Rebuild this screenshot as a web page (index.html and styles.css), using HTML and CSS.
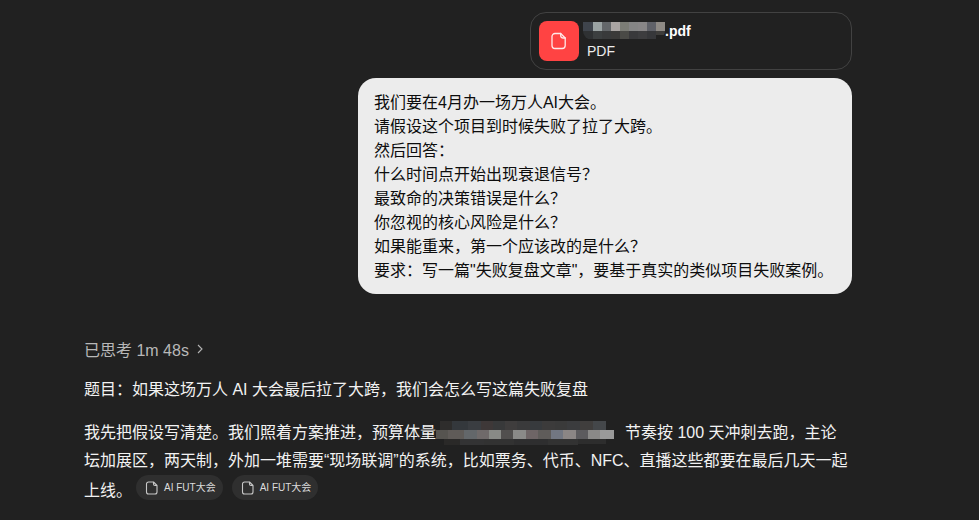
FILE: index.html
```html
<!DOCTYPE html>
<html lang="zh-CN">
<head>
<meta charset="utf-8">
<title>AI 大会失败复盘</title>
<link rel="stylesheet" href="styles.css">
</head>
<body>
<main class="thread">
  <section class="user">
    <div class="file-card">
      <div class="file-icon">
        <svg width="20" height="20" viewBox="0 0 20 20" fill="none" stroke="#ffe9e9" stroke-width="1.3" stroke-linejoin="round" stroke-linecap="round"><path d="M6 2.5h5.7L16.2 7v7.5a3 3 0 0 1-3 3H6a3 3 0 0 1-3-3v-9a3 3 0 0 1 3-3z"/><path d="M11.7 2.5v2a2.5 2.5 0 0 0 2.5 2.5h2"/></svg>
      </div>
      <div class="file-text">
        <div class="file-name">
          <svg class="mosaic-name" width="82" height="18" viewBox="0 0 82 18"><g>
            <rect width="10" height="9" x="0" fill="#3f444c"/><rect width="9" height="9" x="10" fill="#9ba3a3"/><rect width="9" height="9" x="19" fill="#64676a"/><rect width="9" height="9" x="28" fill="#aaa5a3"/><rect width="9" height="9" x="37" fill="#7c7d76"/><rect width="9" height="9" x="46" fill="#858585"/><rect width="9" height="9" x="55" fill="#888687"/><rect width="9" height="9" x="64" fill="#5f6168"/><rect width="9" height="9" x="73" fill="#8e8a85"/>
            <rect width="10" height="8" x="0" y="9" fill="#2f3133"/><rect width="9" height="8" x="10" y="9" fill="#3c3f40"/><rect width="9" height="8" x="19" y="9" fill="#393a3b"/><rect width="9" height="8" x="28" y="9" fill="#3b3a39"/><rect width="9" height="8" x="37" y="9" fill="#4a4a46"/><rect width="9" height="8" x="46" y="9" fill="#39393b"/><rect width="9" height="8" x="55" y="9" fill="#3d3d3f"/><rect width="9" height="8" x="64" y="9" fill="#36373a"/><rect width="9" height="4" x="73" y="9" fill="#3e3d3b"/>
          </g></svg><span>.pdf</span>
        </div>
        <div class="file-type">PDF</div>
      </div>
    </div>
    <div class="bubble">
      <p>我们要在4月办一场万人AI大会。</p>
      <p>请假设这个项目到时候失败了拉了大跨。</p>
      <p>然后回答：</p>
      <p>什么时间点开始出现衰退信号？</p>
      <p>最致命的决策错误是什么？</p>
      <p>你忽视的核心风险是什么？</p>
      <p>如果能重来，第一个应该改的是什么？</p>
      <p>要求：写一篇"失败复盘文章"，要基于真实的类似项目失败案例。</p>
    </div>
  </section>
  <section class="assistant">
    <div class="thought">已思考 1m 48s
      <svg width="8" height="10" viewBox="0 0 8 10" fill="none" stroke="#b4b4b4" stroke-width="1.1"><path d="M2 1l4 4-4 4"/></svg>
    </div>
    <p class="lead">题目：如果这场万人 AI 大会最后拉了大跨，我们会怎么写这篇失败复盘</p>
    <p class="para">我先把假设写清楚。我们照着方案推进，预算体量<svg class="mosaic-body" width="181" height="26" viewBox="0 0 181 26"><g>
      <rect width="12" height="9" x="4" y="1" fill="#2e2d2c"/><rect width="16" height="9" x="16" y="1" fill="#34383c"/><rect width="13" height="9" x="32" y="1" fill="#3a3d41"/><rect width="12" height="9" x="45" y="1" fill="#3e3838"/><rect width="12" height="9" x="57" y="1" fill="#38393a"/><rect width="12" height="9" x="69" y="1" fill="#3f3d3d"/><rect width="13" height="9" x="81" y="1" fill="#3a3a3b"/><rect width="12" height="9" x="94" y="1" fill="#373a3d"/><rect width="13" height="9" x="106" y="1" fill="#3c3b3b"/><rect width="12" height="9" x="119" y="1" fill="#3a3a3a"/><rect width="13" height="9" x="131" y="1" fill="#3b3c3e"/><rect width="13" height="9" x="144" y="1" fill="#403e3d"/><rect width="13" height="9" x="157" y="1" fill="#44474a"/>
      <rect width="12" height="9" x="0" y="10" fill="#565450"/><rect width="16" height="9" x="12" y="10" fill="#5f5b58"/><rect width="13" height="9" x="28" y="10" fill="#63676a"/><rect width="12" height="9" x="41" y="10" fill="#6f6a6a"/><rect width="12" height="9" x="53" y="10" fill="#888a86"/><rect width="12" height="9" x="65" y="10" fill="#514f4e"/><rect width="13" height="9" x="77" y="10" fill="#8a8a88"/><rect width="12" height="9" x="90" y="10" fill="#6e6566"/><rect width="13" height="9" x="102" y="10" fill="#5f5c5a"/><rect width="12" height="9" x="115" y="10" fill="#727782"/><rect width="13" height="9" x="127" y="10" fill="#8b8685"/><rect width="12" height="9" x="140" y="10" fill="#5c5b5e"/><rect width="12" height="9" x="152" y="10" fill="#8a8988"/><rect width="14" height="9" x="164" y="10" fill="#9a9a9a"/>
      <rect width="16" height="6" x="8" y="19" fill="#2a2928"/><rect width="24" height="6" x="24" y="19" fill="#333334"/><rect width="30" height="6" x="48" y="19" fill="#323232"/><rect width="34" height="6" x="78" y="19" fill="#2e2e2f"/><rect width="30" height="6" x="112" y="19" fill="#323232"/><rect width="28" height="5" x="142" y="19" fill="#2d2d2d"/>
    </g></svg><span class="after-mosaic">节奏按 100 天冲刺去跑，主论</span>坛加展区，两天制，外加一堆需要“现场联调”的系统，比如票务、代币、NFC、直播这些都要在最后几天一起上线。<span class="cite"><svg width="14" height="14" viewBox="0 0 14 14" fill="none" stroke="#c8c8c8" stroke-width="1.1" stroke-linejoin="round"><path d="M3.5 1h5l3.5 3.5V11a2 2 0 0 1-2 2H3.5a2 2 0 0 1-2-2V3a2 2 0 0 1 2-2z"/><path d="M8.5 1v2a1.5 1.5 0 0 0 1.5 1.5h2"/></svg>AI FUT大会</span><span class="cite"><svg width="14" height="14" viewBox="0 0 14 14" fill="none" stroke="#c8c8c8" stroke-width="1.1" stroke-linejoin="round"><path d="M3.5 1h5l3.5 3.5V11a2 2 0 0 1-2 2H3.5a2 2 0 0 1-2-2V3a2 2 0 0 1 2-2z"/><path d="M8.5 1v2a1.5 1.5 0 0 0 1.5 1.5h2"/></svg>AI FUT大会</span></p>
  </section>
</main>
</body>
</html>
```
FILE: styles.css
```css
* { box-sizing: border-box; }
html, body { margin: 0; height: 100%; }
body {
  background: #212121;
  color: #f2f2f2;
  font-family: "Liberation Sans", "Noto Sans CJK SC", sans-serif;
  font-size: 16px;
  overflow: hidden;
}
p { margin: 0; }
.thread { display: flex; flex-direction: column; }
.user {
  display: flex;
  flex-direction: column;
  align-items: flex-end;
  gap: 8px;
  padding: 12px 127px 0 0;
}
.file-card {
  display: flex;
  align-items: center;
  gap: 8px;
  width: 322px;
  height: 58px;
  padding: 0 8px;
  border: 1px solid #424242;
  border-radius: 16px;
}
.file-icon {
  width: 40px;
  height: 40px;
  border-radius: 8px;
  background: #ff4343;
  display: flex;
  align-items: center;
  justify-content: center;
}
.file-text { display: flex; flex-direction: column; }
.file-name {
  display: flex;
  align-items: center;
  height: 20px;
  margin-left: -4px;
  font-size: 14px;
  font-weight: 700;
  color: #fff;
}
.mosaic-name { border-radius: 0 0 9px 9px; display: block; }
.file-type { font-size: 14px; line-height: 20px; color: #ececec; }
.bubble {
  width: 494px;
  padding: 13px 16px 11px;
  background: #ececec;
  color: #0d0d0d;
  border-radius: 18px;
  line-height: 24px;
}
.assistant { padding: 43px 0 0 84px; width: 852px; }
.thought {
  display: flex;
  align-items: center;
  gap: 7px;
  height: 24px;
  color: #b8b8b8;
}
.lead { margin-top: 17px; line-height: 24px; }
.para { margin-top: 17px; line-height: 28px; }
.mosaic-body { vertical-align: -8px; }
.after-mosaic { margin-left: 8px; }
.cite {
  display: inline-flex;
  align-items: center;
  gap: 5px;
  height: 25px;
  margin-left: 4px;
  padding: 0 7px 0 9px;
  border-radius: 13px;
  background: #2f2f2f;
  font-size: 10px;
  color: #dcdcdc;
  vertical-align: 1px;
}
.cite + .cite { margin-left: 9px; }
```
